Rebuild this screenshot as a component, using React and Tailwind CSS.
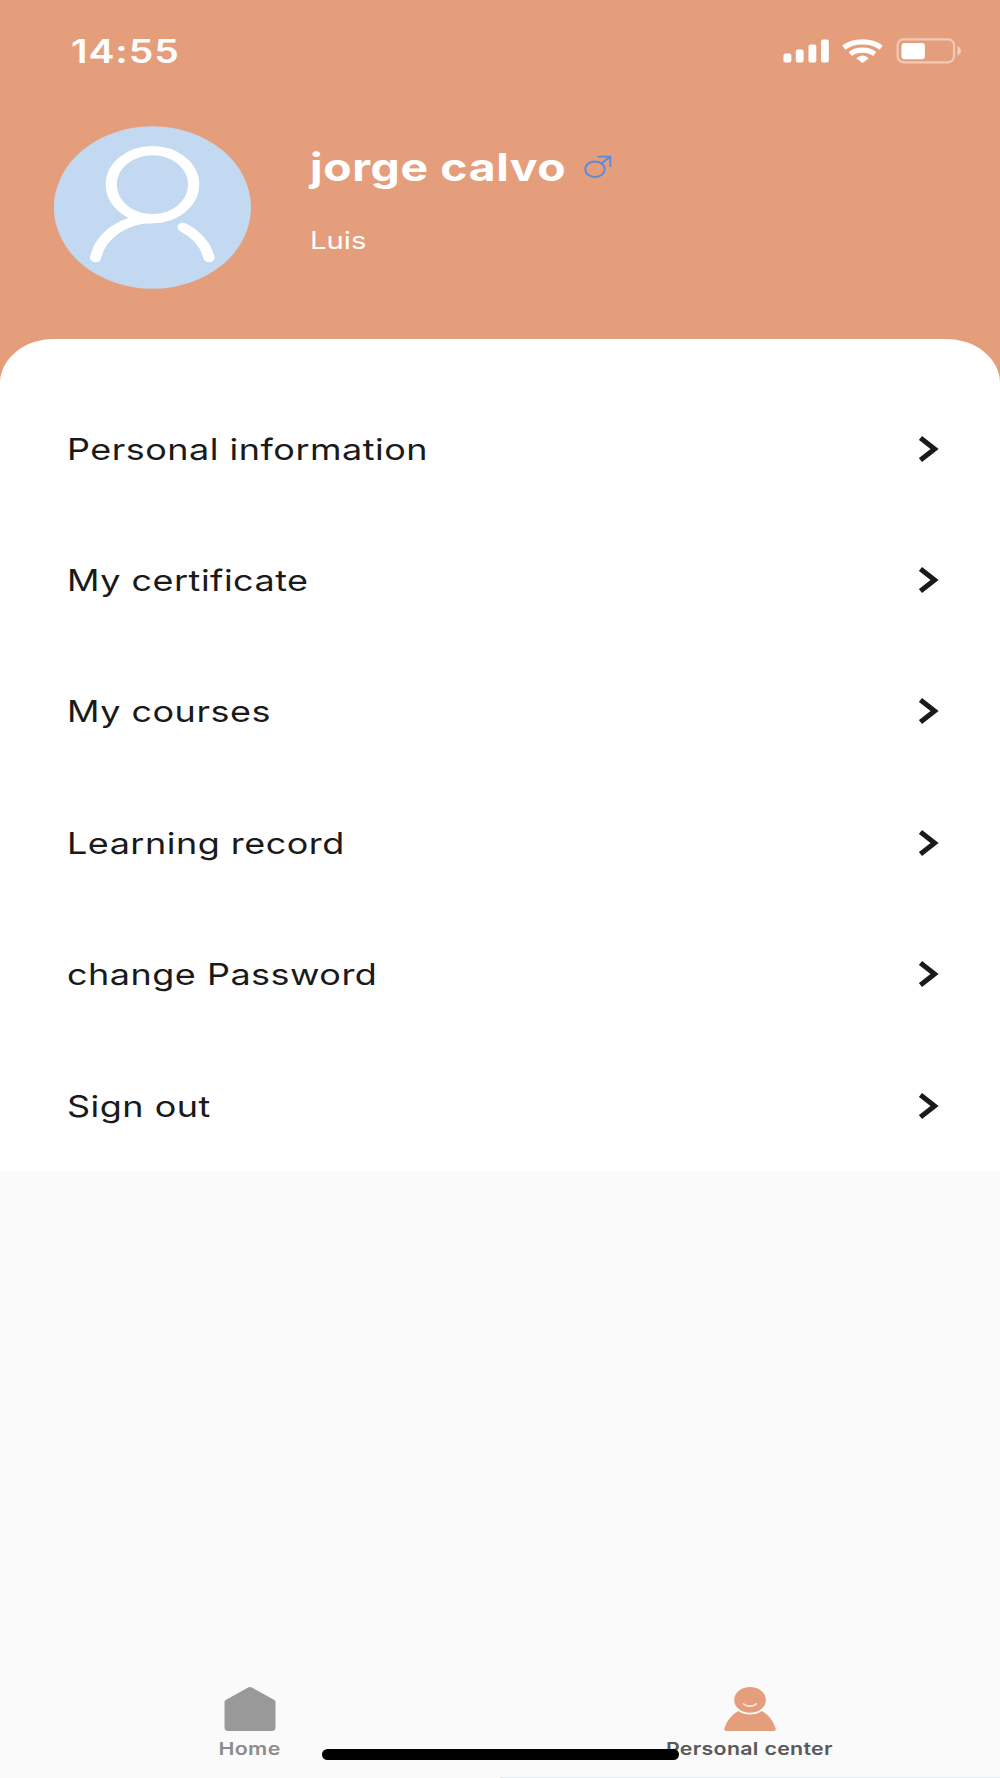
import React from "react";

const menuItems = [
  "Personal information",
  "My certificate",
  "My courses",
  "Learning record",
  "change Password",
  "Sign out",
];

const StatusBar = () => (
  <div className="flex h-[101px] items-center justify-between pl-[71px] pr-[38px]">
    <span className="origin-left scale-x-[1.22] pt-0.5 text-[32px] font-semibold leading-none tracking-[0.75px] text-white">
      14:55
    </span>
    <div className="flex items-center">
      <svg className="h-6 w-[46px]" viewBox="0 0 46 24" fill="#fff">
        <rect x="0.5" y="14.5" width="7.8" height="9" rx="2" />
        <rect x="12.8" y="10.5" width="7.8" height="13" rx="2" />
        <rect x="25.5" y="5.5" width="7.8" height="18" rx="2" />
        <rect x="38" y="0.5" width="7.8" height="23" rx="2" />
      </svg>
      <svg
        className="ml-[13px] h-6 w-[41px]"
        viewBox="0 0 41 24"
        fill="none"
        stroke="#fff"
        strokeWidth="5.2"
      >
        <path d="M1.8 8.6C12 0.9 29 0.9 39.2 8.6" />
        <path d="M8.3 15C15 9.9 26 9.9 32.7 15" />
        <path d="M14.2 19.2Q20.5 14 26.8 19.2L20.5 24Z" fill="#fff" stroke="none" />
      </svg>
      <svg className="ml-[13px] h-[26px] w-[66px]" viewBox="0 0 66 26">
        <rect x="1.6" y="1.3" width="56.4" height="23" rx="6" fill="none" stroke="#fff" strokeOpacity="0.45" strokeWidth="2.2" />
        <rect x="5.5" y="5" width="23.4" height="16.3" rx="3" fill="#fff" />
        <path d="M61.5 8.3C66 9.6 66 16.2 61.5 17.4Z" fill="#fff" fillOpacity="0.5" />
      </svg>
    </div>
  </div>
);

const Avatar = () => (
  <svg
    className="h-[163px] w-[197px] shrink-0"
    viewBox="0 0 162.5 163"
    preserveAspectRatio="none"
    fill="none"
    stroke="#fff"
    strokeWidth="9.2"
    strokeLinecap="round"
  >
    <circle cx="81.2" cy="81.5" r="81.3" fill="#c2d9f1" stroke="none" />
    <circle cx="81.2" cy="58.6" r="34" />
    <path d="M34.3 131.7A47.6 47.6 0 0 1 81.2 92.6" />
    <path d="M106.4 101.3A47.6 47.6 0 0 1 127.9 131.7" />
  </svg>
);

const MaleIcon = () => (
  <svg
    className="absolute left-[273px] top-[29px] h-[24px] w-[30px]"
    viewBox="0 0 30 24"
    fill="none"
    stroke="#5b8ad8"
    strokeWidth="1.9"
  >
    <ellipse cx="12" cy="14.3" rx="9.7" ry="7.8" />
    <path d="M18.5 8.4L27 1.6M14.5 1.6H27.3V12" />
  </svg>
);

const Chevron = () => (
  <svg
    className="h-[28px] w-[20px]"
    viewBox="0 0 20 28"
    fill="none"
    stroke="#1a1a1a"
    strokeWidth="5"
  >
    <path d="M1.5 2.9L15.6 14L1.5 25.1" />
  </svg>
);

const HomeIcon = () => (
  <svg className="h-11 w-[52px]" viewBox="0 0 52 44" fill="#999">
    <path d="M23.7 0.7Q26 -0.5 28.3 0.7L50.3 13Q51.5 13.8 51.5 15V40.5Q51.5 44 47.5 44H4.5Q0.5 44 0.5 40.5V15Q0.5 13.8 1.7 13Z" />
  </svg>
);

const PersonIcon = () => (
  <svg className="h-11 w-[52px]" viewBox="0 0 52 44" fill="#e59e7c">
    <path d="M14.2 24C20 28.8 32 28.8 37.8 24C45 28.4 49.5 34.5 51.7 41.7Q52 44 50 44H2Q0 44 0.3 41.7C2.5 34.5 7 28.4 14.2 24Z" />
    <ellipse cx="26" cy="12.9" rx="15.8" ry="12.9" />
    <path d="M19.5 16.8Q26 21.5 32.5 16.8" fill="none" stroke="#fbe9e0" strokeWidth="1.6" strokeLinecap="round" />
  </svg>
);

const App = () => {
  return (
    <div className="relative flex h-[1778px] w-[1000px] flex-col overflow-hidden bg-[#fafafa] font-['Inter',sans-serif]">
      <header className="h-[389px] shrink-0 bg-[#e59e7c]">
        <StatusBar />
        <div className="flex pl-[54px] pt-[25px]">
          <Avatar />
          <div className="relative ml-[59px] pt-[17px]">
            <h1 className="origin-left scale-x-[1.22] whitespace-nowrap text-[38px] font-bold leading-[48px] tracking-[0.5px] text-white">
              jorge calvo
            </h1>
            <MaleIcon />
            <p className="mt-[34px] origin-left scale-x-[1.22] text-[24px] leading-8 text-white">
              Luis
            </p>
          </div>
        </div>
      </header>

      <main className="-mt-[50px] shrink-0 rounded-t-[54px_44px] bg-white pt-[44px]">
        {menuItems.map((label) => (
          <div
            key={label}
            className="flex h-[131.4px] items-center justify-between pl-[67px] pr-[61px]"
          >
            <span className="origin-left scale-x-[1.22] text-[29.5px] font-[370] tracking-[0.4px] text-[#1a1a1a]">
              {label}
            </span>
            <Chevron />
          </div>
        ))}
      </main>

      <nav className="mt-auto grid h-[91px] grid-cols-2">
        <div className="flex flex-col items-center">
          <HomeIcon />
          <span className="mt-[6px] scale-x-[1.22] text-[17.5px] font-semibold leading-6 tracking-[0.3px] text-[#8c8c8c]">
            Home
          </span>
        </div>
        <div className="flex flex-col items-center">
          <PersonIcon />
          <span className="mt-[6px] mr-0.5 scale-x-[1.22] text-[17.5px] font-semibold leading-6 tracking-[0.25px] text-[#595959]">
            Personal center
          </span>
        </div>
      </nav>

      {/* home indicator */}
      <div className="absolute bottom-[18px] left-[322px] h-[11px] w-[357px] rounded-full bg-black" />
      <div className="absolute bottom-0 right-0 h-px w-1/2 bg-[#e4e9ee]" />
    </div>
  );
};

export default App;
